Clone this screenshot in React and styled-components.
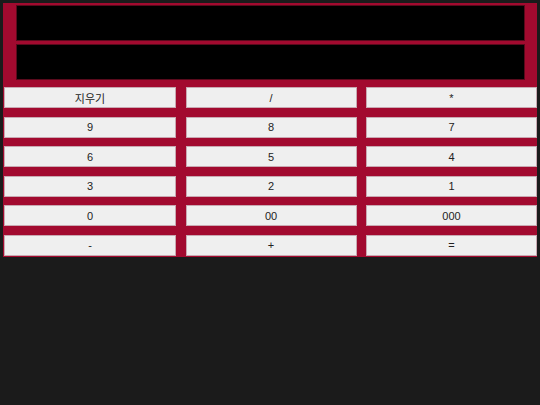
import React, { useState } from "react";
import styled, { createGlobalStyle } from "styled-components";

const GlobalStyle = createGlobalStyle`
  html, body {
    margin: 0;
    background: #1b1b1b;
  }
  body {
    padding: 3px;
    font-family: "Liberation Sans", Arial, "Noto Sans CJK KR", sans-serif;
  }
`;

const keys = ["지우기", "/", "*", "9", "8", "7", "6", "5", "4", "3", "2", "1", "0", "00", "000", "-", "+", "="];

const App = () => {
  const [expr, setExpr] = useState("");
  const [result, setResult] = useState("");

  const press = key => {
    if (key === "지우기") {
      setExpr("");
      setResult("");
    } else if (key === "=") {
      try {
        setResult(String(Function(`return (${expr})`)()));
      } catch (e) {
        setResult("Error");
      }
    } else {
      setExpr(expr + key);
    }
  };

  return (
    <>
      <GlobalStyle />
      <Calculator>
        <Display value={expr} readOnly />
        <Display value={result} readOnly />
        <Keypad>
          {keys.map(key => (
            <Key key={key} onClick={() => press(key)}>
              {key}
            </Key>
          ))}
        </Keypad>
      </Calculator>
    </>
  );
};

export default App;

const Calculator = styled.div`
  width: 534px;
  box-sizing: border-box;
  padding: 2px 0 1px 1px;
  background: #a20a2f;
  display: flex;
  flex-direction: column;
  align-items: center;
`;

const Display = styled.input`
  width: 509px;
  height: 36px;
  box-sizing: border-box;
  margin: 0 0 3px 0;
  border: 1px solid #5a0a1c;
  background: #000;
  color: #fff;
  font-size: 20px;
  text-align: right;
  outline: none;
`;

const Keypad = styled.div`
  margin-top: 4px;
  width: 100%;
  display: grid;
  grid-template-columns: 172px 171px 171px;
  column-gap: 9.5px;
  row-gap: 8.6px;
`;

const Key = styled.button`
  height: 21px;
  box-sizing: border-box;
  padding: 0;
  border: 1px solid #c9a9b2;
  background: #efefef;
  color: #222;
  font-family: "Liberation Sans", Arial, "Noto Sans CJK KR", sans-serif;
  font-size: 11px;
  cursor: pointer;
`;
